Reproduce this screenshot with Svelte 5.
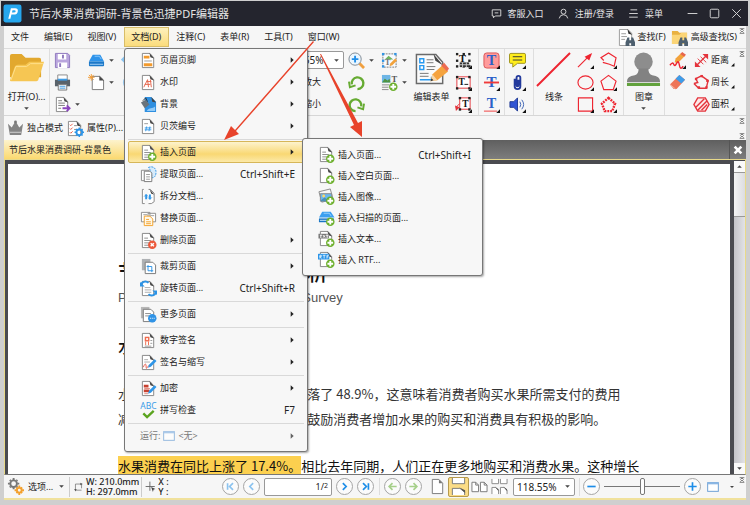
<script lang="ts">
  type MenuItem = { icon: string; label: string; keys?: string; sub?: boolean; active?: boolean };

  let pageNumber = $state('1');
  let zoom = $state('118.55%');
  let zoomLevel = $state(50);

  const menus = ['文件', '编辑(E)', '视图(V)', '文档(D)', '注释(C)', '表单(R)', '工具(T)', '窗口(W)'];

  const groups: MenuItem[][] = [
    [
      { icon: 'header', label: '页眉页脚', sub: true },
      { icon: 'watermark', label: '水印', sub: true },
      { icon: 'background', label: '背景', sub: true },
      { icon: 'bates', label: '贝茨编号', sub: true },
    ],
    [
      { icon: 'insert', label: '插入页面', sub: true, active: true },
      { icon: 'extract', label: '提取页面...', keys: 'Ctrl+Shift+E' },
      { icon: 'split', label: '拆分文档...' },
      { icon: 'replace', label: '替换页面...' },
      { icon: 'remove', label: '删除页面', sub: true },
    ],
    [
      { icon: 'crop', label: '裁剪页面', sub: true },
      { icon: 'rotate', label: '旋转页面...', keys: 'Ctrl+Shift+R' },
    ],
    [{ icon: 'more', label: '更多页面', sub: true }],
    [
      { icon: 'signature', label: '数字签名', sub: true },
      { icon: 'initials', label: '签名与缩写', sub: true },
    ],
    [
      { icon: 'encrypt', label: '加密', sub: true },
      { icon: 'spell', label: '拼写检查', keys: 'F7' },
    ],
  ];

  const insertItems: MenuItem[] = [
    { icon: 'insert', label: '插入页面...', keys: 'Ctrl+Shift+I' },
    { icon: 'insertBlank', label: '插入空白页面...' },
    { icon: 'insertImage', label: '插入图像...' },
    { icon: 'insertScan', label: '插入扫描的页面...' },
    { icon: 'insertText', label: '插入文本...' },
    { icon: 'insertRtf', label: '插入 RTF...' },
  ];

  const page = '<path d="M2.5 1.5h8l4 4.500v10.500h-12z" fill="#fff" stroke="#858585"/><path d="M10 1l5 6-4-1.500z" fill="#444"/>';
  const lines = '<path d="M4.500 6.500h4M4.500 9h7M4.500 11.500h7M4.500 14h5" stroke="#8b8b8b"/>';
  const plus = '<circle cx="13" cy="13.500" r="4.500" fill="#6db02d"/><path d="M13 10.500v6M10 13.500h6" stroke="#fff" stroke-width="2"/>';
  const pen = '<path d="M8.500 14.500l1-3 6-6 2 2-6 6z" fill="#2f96e8"/>';
  const corner = '<path d="M18 14v4h-4z" fill="#111"/>';
  const nodes = (pts: number[][], fill = '#222') =>
    pts.map(([x, y]) => `<rect x="${x - 1}" y="${y - 1}" width="2.500" height="2.500" fill="${fill}"/>`).join('');
  const frame = [[2, 2], [9, 2], [15, 2], [2, 9], [15, 9], [2, 15], [9, 15], [15, 15]];
  const letter = (color: string, size = 14, x = 9, y = 14) =>
    `<text x="${x}" y="${y}" font-family="Liberation Serif, serif" font-weight="700" font-size="${size}" text-anchor="middle" fill="${color}">T</text>`;

  const icons: Record<string, string> = {
    header: page + '<path d="M4 4h6v3H4zM4 12h9v3H4z" fill="#f39a2c"/><path d="M4.500 9.500h8" stroke="#999"/>',
    watermark: page + '<path d="M4 14l4-8 1 8M5 11h6M7 8h5M11 6l1 8" fill="none" stroke="#e5654b"/>',
    background: '<path d="M5 1h7l5 5v11H5z" fill="#2e8fe0"/><path d="M7 16c3-5 6-2 9-5v5z" fill="#92cbf8"/><path d="M1 7l5-3 4 5-5 4z" fill="#69737b"/><path d="M3 5l3-3 2 4" stroke="#333" fill="none"/><path d="M12 1l5 6-4-1z" fill="#444"/>',
    bates: page + '<path d="M4.500 6h4" stroke="#999"/><path d="M7 9l-1 5M10.500 9l-1 5M5 10.500h7M5 12.500h7" stroke="#3a9be8"/>',
    insert: page + lines + plus,
    insertBlank: page + plus,
    insertImage: '<path d="M1 4l12-3 3 11-12 3z" fill="#f7f7f7" stroke="#888"/><path d="M2.500 6h12v8h-12z" fill="#6bb7ef" stroke="#8a8a8a"/><circle cx="6" cy="8.500" r="1.500" fill="#ffd966"/><path d="M3 13l4-3 4 3 3-2v3H3z" fill="#4a8fb8"/>' + plus,
    insertScan: '<path d="M4.500 3h9l4 6H1z" fill="#3b9ff0"/><path d="M6 4.500h6l2 3" stroke="#9bd0fa" fill="none"/><path d="M1 10h16v4H1z" fill="#1875c4"/><path d="M2 12h8" stroke="#cfe8fb"/>' + plus,
    insertText: page + '<path d="M0.500 4h11v5H0.500z" fill="#777"/><path d="M2 5.500h2.500M3 5.500v3M5.500 5.500l2 2.500M7.500 5.500l-2 2.500M8.500 5.500h2.500M9.700 5.500v3" stroke="#fff" fill="none"/>' + plus,
    insertRtf: page + '<path d="M0 3h12v6H0z" fill="#2b95e9"/><path d="M2 8V4.500h1.500v1.500H2l2 2M5 4.500h3M6.500 4.500V8M9.500 8V4.500h2M9.500 6.200h1.500" stroke="#fff" fill="none" stroke-width=".8"/>' + plus,
    extract: '<path d="M9 1.500c5-2 8 1 8 5s-2 6-4 6l-2-8z" fill="#d6ebfb" stroke="#3597e5" stroke-dasharray="2 1"/><path d="M1.500 4.500h8v11h-8z" fill="#fff" stroke="#888"/><path d="M4.500 5.500h6l2 2v9h-8z" fill="#fff" stroke="#777"/><path d="M6.500 9h4M6.500 11.500h4M6.500 14h4" stroke="#999"/>',
    split: '<path d="M4 1.500H2.500v15H5M9 1.500h2l4 4v9l-3 2H9" fill="#fff" stroke="#858585"/><path d="M10 1l5 6-3-1z" fill="#444"/><path d="M6.500 7v5M10.500 7v5" stroke="#3197e8" stroke-width="2"/><path d="M4.500 9l2-2 2 2M8.500 10l2 2 2-2" stroke="#3197e8" fill="none"/>',
    replace: '<path d="M1.500 2.500h9v10h-9zM8.500 3.500h8v9h-8z" fill="#fff" stroke="#8b8b8b"/><path d="M3.500 5h4M11 6h4" stroke="#999"/><path d="M4.500 6.500h6l3 3v7h-9z" fill="#fff8e8" stroke="#f3a129"/><path d="M6.500 10h3M6.500 12.500h5M6.500 14.500h5" stroke="#f3a129"/>',
    remove: page + lines + '<circle cx="13" cy="13.500" r="4.500" fill="#ec5a3c"/><path d="M11.300 11.800l3.400 3.400M14.700 11.800l-3.400 3.400" stroke="#fff" stroke-width="1.500"/>',
    crop: '<path d="M2 1h9v12H2z" fill="#aeb1b4"/><path d="M5.500 4.500h8l3 3v9h-11z" fill="#fff" stroke="#777"/><path d="M8.500 7.500v6h5.500M7 9h5.500v6" fill="none" stroke="#2c93e5"/>',
    rotate: page + '<path d="M5 8h6M5 10.500h7M5 13h7" stroke="#aaa"/><path d="M1 6c0-4 5-6 8-3M17 12c0 4-5 6-8 3" fill="none" stroke="#2c93e5" stroke-width="2"/><path d="M0 2v5h5zM18 16v-5h-5z" fill="#2c93e5"/>',
    more: '<path d="M1 1h9v12H1z" fill="#b7b7b7"/><path d="M3.500 3.500h8l3 3v10h-11z" fill="#fff" stroke="#777"/><path d="M5.500 8h6M5.500 10.500h4" stroke="#888"/><circle cx="13" cy="13" r="4.500" fill="#2f93e6"/><path d="M10.500 13h1M12.500 13h1M14.500 13h1" stroke="#fff"/>',
    signature: page + '<path d="M5 5h5v5H5z" fill="#ef6b4e"/><circle cx="7.500" cy="7.500" r="1.200" fill="#fff"/><path d="M6 10v4M9 10v4" stroke="#ef6b4e"/><path d="M11 9h2M11 12h2M5 15h7" stroke="#999"/>',
    initials: page + '<path d="M4.500 6h4M4.500 8.500h6" stroke="#aaa"/><path d="M3.500 14c2-5 3-4 3 0s2-3 3-1" stroke="#e85a4a" fill="none"/>' + pen,
    encrypt: page + '<path d="M4 5h5v3H4zM4 10h6v3H4z" fill="#c8402e"/><path d="M4.500 9h6M4.500 14.500h4" stroke="#e08a7c"/>' + pen,
    spell: '<text x="9" y="7" font-family="Noto Sans, sans-serif" font-size="9" text-anchor="middle" fill="#3a9ce8">ABC</text><path d="M3.500 12l4 4 7-6.500" fill="none" stroke="#5ba41f" stroke-width="2.500"/>',
    folder: '<path d="M1 4q0-2 2-2h10l4 4h14q2 0 2 2v18H1z" fill="#e2a82e"/><path d="M1 29L6 15q1-2 3-2h8l4-3h15l-6 19q-1 1-2 1H2q-1 0-1-1z" fill="#f6c653"/><path d="M2 29L7 15h11l4-3h13" fill="none" stroke="#ffe08d"/>',
    save: '<path d="M1.500 1.500h13l2 2v13h-15z" fill="#b9a5dd" stroke="#8e78bd"/><path d="M4 2h9v6H4zM4 11h10v6H4z" fill="#fff"/><path d="M9.500 3v4M6.500 12v4" stroke="#8e78bd" stroke-width="2"/>',
    print: '<path d="M4 1h10v6H4z" fill="#fff" stroke="#888"/><path d="M1 6h16v7H1z" fill="#59626a"/><path d="M4 5h10v2H4z" fill="#3d9be5"/><path d="M4.500 11h9v6h-9z" fill="#f5f5f5" stroke="#777"/><path d="M6 13h6M6 15h6" stroke="#3d9be5"/>',
    export: page + '<path d="M4.500 5h4M4.500 7.500h7M4.500 10h7M4.500 13h3" stroke="#777"/><path d="M9 13h7M13.500 10l3 3-3 3" fill="none" stroke="#8a45bd" stroke-width="2"/>',
    scan: '<path d="M5 3h8l4 7H1z" fill="#2d93ea"/><path d="M7 4.500h5l2 3" stroke="#8bc8fa" fill="none"/><path d="M1 10h16v4q0 1-1 1H2q-1 0-1-1z" fill="#1b78c8"/><path d="M2 13h14" stroke="#a8d5f8"/>',
    create: '<path d="M4.500 2.500h8l4 4v10h-12z" fill="#fff" stroke="#777"/><path d="M12 2l5 5h-5z" fill="#444"/><path d="M3.500 0v7M0 3.500h7M1 1l5 5M6 1L1 6" stroke="#f29b32"/>',
    undo: '<path d="M7 3L2 8l5 5M2 8h15" fill="none" stroke="#8dc6f1" stroke-width="3"/>',
    redo: '<circle cx="10" cy="9" r="7" fill="none" stroke="#9cccf0" stroke-width="2"/>',
    zoomIn: '<path d="M12 12l5 5" stroke="#f0a040" stroke-width="3"/><circle cx="7.500" cy="7.500" r="6.500" fill="#eaf6ff" stroke="#7d8790"/><path d="M7.500 4v7M4 7.500h7" stroke="#218ee8" stroke-width="2"/>',
    rotateLeft: '<path d="M4 11A6.200 6.200 0 1 1 10 16" fill="none" stroke="#66ab32" stroke-width="2.500"/><path d="M1 8l1 6 6-2" fill="none" stroke="#66ab32" stroke-width="2"/>',
    rotateRight: '<path d="M14 11A6.200 6.200 0 1 0 8 16" fill="none" stroke="#66ab32" stroke-width="2.500"/><path d="M17 8l-1 6-6-2" fill="none" stroke="#66ab32" stroke-width="2"/>',
    editContent: '<path d="M2 2h14v14H2z" fill="#f8fbff" stroke="#777" stroke-dasharray="2 1"/><path d="M4 8l4-4 5 4z" fill="#71b35c"/>' + letter('#777', 9, 7, 14) + '<path d="M9 15l1-3 5-5 2 2-5 5z" fill="#f2a23b"/>' + nodes([[2, 2], [15, 2], [2, 9], [2, 15]], '#3095e5'),
    addContent: '<path d="M1 1h9v8H1z" fill="#6eb6e6"/><path d="M1 9l3-4 3 2 2-2 1 4z" fill="#4f9443"/>' + letter('#555', 9, 14, 8) + '<path d="M1 11.500h8M1 14h7M1 16.500h7" stroke="#888"/>' + plus,
    form: '<path d="M2.500 2.500h20l7 8v22h-27z" fill="#fafafa" stroke="#6a6a6a" stroke-width="1.500"/><path d="M20 2l10 12-8-5z" fill="#444"/><path d="M6 7h4v4H6zM6 14h4v4H6z" fill="#fff" stroke="#279af1" stroke-width="1.500"/><path d="M13 8h7M13 11h7M13 15h9M13 18h8M6 22h9M6 25h9" stroke="#777"/><path d="M6 28.500h12v-3" fill="none" stroke="#279af1" stroke-width="1.500"/><path d="M17 30l2-7 10-9 6 6-11 9z" fill="#f5a33f"/><path d="M28 14l3-3 5 6-2 3z" fill="#ec6b51"/><path d="M17 30l2-7 5 6z" fill="#f6d6aa"/><path d="M17 30l1-3 2 2z" fill="#333"/>',
    textFrame: nodes(frame) + letter('#111', 11, 8, 11) + '<path d="M5 11h10v5H5z" fill="#333"/><path d="M8 11v5M12 11v5M5 13.500h10" stroke="#ccc"/>' + corner,
    textBox: '<path d="M2 3h14v12H2z" fill="#fff" stroke="#e4343c"/>' + letter('#111', 10, 7, 12) + '<path d="M10 11h4" stroke="#111"/>' + nodes([[2, 3], [15, 3], [2, 15], [15, 15]]) + corner,
    callout: '<path d="M5 2h11v12H5zM5 8L1 12" fill="#fff" stroke="#e4343c"/><path d="M0 10l1 6 4-4z" fill="#e4343c"/>' + letter('#111', 10, 11, 12) + nodes([[5, 2], [15, 2], [5, 14], [15, 14]]) + corner,
    highlight: '<rect x="1" y="1" width="16" height="16" rx="3" fill="#ff9b9b" stroke="#d95353"/>' + letter('#2b61c9', 15) + corner,
    strike: letter('#2b61c9', 16) + '<path d="M1 9h16" stroke="#f03b3b" stroke-width="2"/>' + corner,
    underline: letter('#2b61c9', 15, 9, 13) + '<path d="M1 16h14" stroke="#f03b3b"/>' + corner,
    note: '<path d="M2 1.500h14q1.500 0 1.500 1.500v8q0 1-1.500 1H9l-5 4v-4H2q-1.500 0-1.500-1V3q0-1.500 1.500-1.500z" fill="#ffed1b" stroke="#9b9119"/><path d="M4 5h10M4 8.500h10" stroke="#333"/>' + corner,
    clip: '<path d="M6 5v8q0 3 3 3t3-3V4q0-2-2-2T8 4v8q0 1 1 1t1-1V6" fill="none" stroke="#233a9c" stroke-width="2"/>' + corner,
    sound: '<path d="M1 6h4l4-4v14l-4-4H1z" fill="#3155d4" stroke="#203a93"/><path d="M11.500 6q2 3 0 6M13.500 4q4 5 0 10" fill="none" stroke="#3a61b3"/>' + corner,
    line: '<path d="M1 35L35 1" stroke="#ee2430" stroke-width="2"/>',
    arrow: '<path d="M1 16L14 3" stroke="#ee2430" stroke-width="1.200"/><path d="M8 5l8-4-3 8z" fill="#ee2430"/>' + corner,
    polyline: '<path d="M4 9L1 6l8-5 8 5-2 9-5-2-7-2" fill="none" stroke="#ee2430" stroke-width="1.200"/>' + corner,
    oval: '<ellipse cx="9" cy="9" rx="8" ry="7" fill="none" stroke="#ee2430" stroke-width="1.200"/>' + corner,
    polygon: '<path d="M9 1.500l8 6-3 9H4L1 7.500z" fill="none" stroke="#ee2430" stroke-width="1.200"/>' + corner,
    rect: '<path d="M1.500 2h15v14h-15z" fill="none" stroke="#ee2430" stroke-width="1.200"/>' + corner,
    cloud: '<path d="M9 2l7 6-3 8H5L2 8z" fill="none" stroke="#ee2430" stroke-width="2.500" stroke-dasharray="2 1"/>' + corner,
    stamp: '<circle cx="18" cy="10" r="9.500" fill="#8d8d8d"/><path d="M13 17h10q0 6 4 7 8 1 8 6v1H1v-1q0-5 8-6 4-1 4-7z" fill="#828282"/><path d="M1 33.500h34" stroke="#62a23d" stroke-width="3"/>',
    pencil: '<path d="M6 11l1-4 6-6 4 3-7 7z" fill="#f2a23b"/><path d="M12 2l2-2 4 3-2 2z" fill="#e8664c"/><path d="M1 14q3-4 4-1t3-1 3 2 4 1" fill="none" stroke="#ee2430" stroke-width="1.500"/>' + corner,
    eraser: '<path d="M1 11L11 1l6 5L8 16H5z" fill="#ee7558"/><path d="M7 5l4-4 6 5-4 4z" fill="#3e9ce9"/><path d="M1 11l6 5" stroke="#f7b39f"/>',
    distance: '<path d="M4 14L14 4" stroke="#e4343c" stroke-width="1.500"/><path d="M2 10v6h6zM16 8V2h-6z" fill="#e4343c"/><path d="M5 7l6 6M8 5l6 6" stroke="#e4343c"/>',
    perimeter: '<path d="M3 5l6-3 7 5-2 8H6M3 5l2 4-4 1M1 10l5 5" fill="none" stroke="#e4343c" stroke-width="1.500"/>' + nodes([[3, 5], [9, 2], [15, 7], [14, 14], [6, 14]], '#e4343c'),
    area: '<path d="M5 2h8l4 7-4 7H5L1 9z" fill="#fde8e8" stroke="#e4343c" stroke-width="1.500"/><path d="M3 12L12 3M5 15L15 5M9 15l6-6" stroke="#e4343c" stroke-width="1.500"/>',
    crown: '<path d="M1 4l4 4 4-7 4 7 4-4-2 12H3z" fill="#848484"/><path d="M3 13h12" stroke="#d5d5d5"/><circle cx="9" cy="2" r="1.500" fill="#777"/>',
    properties: '<path d="M1.500 1.500h9l4 4v11h-13z" fill="#fff" stroke="#888"/><path d="M10 1l5 6-4-1z" fill="#444"/><path d="M3 5l1 1 2-2M3 9l1 1 2-2M3 13l1 1 2-2" stroke="#e85842" fill="none"/><path d="M7.500 6h3M7.500 10h4" stroke="#888"/><circle cx="13" cy="13" r="3" fill="none" stroke="#2e94e7" stroke-width="2"/><path d="M13 8v2M13 16v2M8 13h2M16 13h2M9.500 9.500l1 1M15.500 15.500l1 1M16.500 9.500l-1 1M9.500 16.500l1-1" stroke="#2e94e7" stroke-width="1.500"/>',
    find: '<path d="M1.500.500h9l4 4v13h-13z" fill="#fff" stroke="#999"/><path d="M10 0l5 6-4-1z" fill="#333"/><path d="M3.500 5h5M3.500 8h6M3.500 11h4" stroke="#999"/><path d="M10 9h2v3h2V9h2l2 5v4h-4v-3h-2v3H8v-4z" fill="#4d5f6e"/>',
    findAll: '<path d="M1 2h6l2 2h8v12H1z" fill="#e9b141"/><path d="M1 16V6h8l2-2h6v12z" fill="#fbd577"/><path d="M10 9h2v3h2V9h2l2 5v4h-4v-3h-2v3H8v-4z" fill="#4d5f6e"/>',
    gears: '<circle cx="7" cy="6" r="3.500" fill="none" stroke="#777" stroke-width="2"/><path d="M7 0v2M7 10v2M1 6h2M11 6h2M3 2l1 1M10 9l1 1M11 2l-1 1M3 10l1-1" stroke="#777" stroke-width="2"/><circle cx="13" cy="13" r="2.500" fill="none" stroke="#f3a02d" stroke-width="2"/><path d="M13 8v2M13 16v2M8 13h2M16 13h2M10 10l1 1M15 15l1 1M16 10l-1 1M10 16l1-1" stroke="#f3a02d" stroke-width="2"/>',
    size: '<path d="M4 5h10v7M4 5v10h10" fill="none" stroke="#555"/><path d="M12 3l4 2-4 2zM2 13l2 4 2-4z" fill="#555"/>',
    cursor: '<path d="M8 1v15M1 9h15" stroke="#666" stroke-width="1.500"/><path d="M10 10l7 3-3 1-1 4z" fill="#444"/>',
    single: '<path d="M3.500 1.500h7l4 4v11h-11z" fill="#fff" stroke="#777"/><path d="M10.500 1.500l4 4h-4z" fill="#777"/>',
    continuous: '<path d="M2.500 0v6h13V0M2.500 18v-7h8l5 4v3" fill="#fff" stroke="#777"/><path d="M10 10l6 6v-3z" fill="#555"/>',
    facing: '<path d="M1 4.500h4l3 3v7H1zM10 4.500h4l3 3v7h-7z" fill="#fff" stroke="#777"/><path d="M5 4.500v3h3M14 4.500v3h3" stroke="#777" fill="none"/>',
    facingScroll: '<path d="M1 1v5h7V1M10 1v5h7V1M1 17v-7h4l3 3v4M10 17v-7h4l3 3v4" fill="#fff" stroke="#888"/><path d="M4 9l4 5v-2zM13 9l4 5v-2z" fill="#555"/>',
    windowBox: '<rect x="1" y="2.500" width="16" height="13" fill="#fff" stroke="#6fa1d6" stroke-width="1.500"/><path d="M1 2h16v3H1z" fill="#8bb7e4"/>',
    logo: '<rect x=".5" y=".5" width="17" height="17" rx="2" fill="#26a7ee"/><path d="M5 14L7.500 4h4q3 0 2.500 3t-4 3H8l-1 4z" fill="#fff"/><path d="M9 6h2q1 0 1 1t-2 1H8.500z" fill="#26a7ee"/>',
    chat: '<path d="M2 3h14v10H7l-3 3v-3H2z" fill="none" stroke="#ddd" stroke-width="1.500"/><path d="M6 8h6" stroke="#ddd" stroke-width="1.500"/>',
    user: '<circle cx="9" cy="6" r="4" fill="none" stroke="#ddd" stroke-width="1.500"/><path d="M2 17q1-6 7-6t7 6" fill="none" stroke="#ddd" stroke-width="1.500"/>',
    burger: '<path d="M4 3h11M2 9h14M2 15h14" stroke="#ddd" stroke-width="1.500"/>',
    minimize: '<path d="M1 9h16" stroke="#ddd" stroke-width="1.500"/>',
    maximize: '<rect x="2" y="2" width="14" height="14" rx="2" fill="none" stroke="#ddd" stroke-width="1.500"/>',
    close: '<path d="M2 2l14 14M16 2L2 16" stroke="#ddd" stroke-width="1.500"/>',
    tabClose: '<path d="M4 4l10 10M14 4L4 14" stroke="#fff" stroke-width="4"/>',
    caret: '<path d="M3 6h12l-6 6z" fill="#444"/>',
    caretUp: '<path d="M3 12h12L9 6z" fill="#444"/>',
    right: '<path d="M5 1l9 8-9 8z" fill="#222"/>',
    overflow: '<path d="M2 2h14M2 16h14M4 8l5-5 5 5M4 14l5-5 5 5" fill="none" stroke="#444" stroke-width="2"/>',
    first: '<path d="M5.500 5v8M12 5L8 9l4 4" fill="none" stroke="#8cc3ef" stroke-width="2"/>',
    prev: '<path d="M11 5L7 9l4 4" fill="none" stroke="#8cc3ef" stroke-width="2"/>',
    next: '<path d="M7 5l4 4-4 4" fill="none" stroke="#1c8de8" stroke-width="2"/>',
    last: '<path d="M12.500 5v8M6 5l4 4-4 4" fill="none" stroke="#1c8de8" stroke-width="2"/>',
    back: '<path d="M14 9H5M9 5L5 9l4 4" fill="none" stroke="#a6d08a" stroke-width="2"/>',
    forward: '<path d="M4 9h9M9 5l4 4-4 4" fill="none" stroke="#a6d08a" stroke-width="2"/>',
    minus: '<path d="M4 9h10" stroke="#1c8de8" stroke-width="2"/>',
    add: '<path d="M4 9h10M9 4v10" stroke="#1c8de8" stroke-width="2"/>',
    expand: '<path d="M16 4v12H4z" fill="#111"/>',
  };
</script>

{#snippet icon(name: string, kind = 'md')}
  <svg class="icon {kind}" viewBox={kind === 'lg' ? '0 0 36 36' : '0 0 18 18'} aria-hidden="true">{@html icons[name]}</svg>
{/snippet}

{#snippet tool(name: string, title: string, caret = false)}
  <button class="tool" aria-label={title}>
    {@render icon(name)}
    {#if caret}{@render icon('caret', 'xs')}{/if}
  </button>
{/snippet}

{#snippet measure(name: string, label: string)}
  <button class="measure">{@render icon(name)}{label}{@render icon('expand', 'corner')}</button>
{/snippet}

{#snippet menuItem(item: MenuItem)}
  <button class="item" class:active={item.active} role="menuitem">
    {@render icon(item.icon)}
    <span class="name">{item.label}</span>
    {#if item.keys}<span class="keys">{item.keys}</span>{/if}
    {#if item.sub}{@render icon('right', 'xxs')}{/if}
  </button>
{/snippet}

{#snippet round(name: string, title: string)}
  <button class="round" aria-label={title}>{@render icon(name, 'fit')}</button>
{/snippet}

<div class="window">
  <header class="titlebar">
    {@render icon('logo', 'logo')}
    <h1>节后水果消费调研-背景色迅捷PDF编辑器</h1>
    <button>{@render icon('chat', 'sm')}客服入口</button>
    <button>{@render icon('user', 'sm')}注册/登录</button>
    <button>{@render icon('burger', 'sm')}菜单</button>
    <div class="controls">
      <button aria-label="最小化">{@render icon('minimize', 'sm')}</button>
      <button aria-label="最大化">{@render icon('maximize', 'sm')}</button>
      <button aria-label="关闭">{@render icon('close', 'sm')}</button>
    </div>
  </header>

  <div class="body">
    <nav class="menubar">
      {#each menus as menu}
        <button class="menu" class:open={menu === '文档(D)'}>{menu}</button>
      {/each}
      <div class="search">
        <button>{@render icon('find')}查找(F)</button>
        <button>{@render icon('findAll')}高级查找(S)</button>
      </div>
      {@render icon('overflow', 'edge')}
    </nav>

    <div class="toolbar">
      <button class="big open-file">
        {@render icon('folder', 'lg')}
        <span>打开(O)...</span>
        {@render icon('caret', 'xs')}
      </button>
      <div class="group">
        {@render tool('save', '保存')}
        {@render tool('print', '打印')}
        {@render tool('export', '导出', true)}
      </div>
      <div class="group plain">
        {@render tool('scan', '扫描', true)}
        {@render tool('create', '新建', true)}
      </div>
      <div class="group plain">
        {@render tool('undo', '撤销')}
        {@render tool('redo', '重做')}
      </div>
      <div class="group plain zoom-group">
        <div class="select">
          <select aria-label="缩放" bind:value={zoom}><option>118.55%</option></select>
          {@render icon('caret', 'xs')}
        </div>
        <button class="text-tool">放大</button>
        <button class="text-tool">缩小</button>
      </div>
      <div class="group plain">
        {@render tool('zoomIn', '放大工具', true)}
        {@render tool('rotateLeft', '向左旋转')}
        {@render tool('rotateRight', '向右旋转')}
      </div>
      <div class="group plain">
        {@render tool('editContent', '编辑内容', true)}
        {@render tool('addContent', '添加内容', true)}
      </div>
      <button class="big">
        {@render icon('form', 'lg')}
        <span>编辑表单</span>
      </button>
      <div class="group plain">
        {@render tool('textFrame', '打字机')}
        {@render tool('textBox', '文本框')}
        {@render tool('callout', '标注')}
      </div>
      <div class="group spaced">
        {@render tool('highlight', '高亮')}
        {@render tool('strike', '删除线')}
        {@render tool('underline', '下划线')}
      </div>
      <div class="group">
        {@render tool('note', '附注')}
        {@render tool('clip', '附件')}
        {@render tool('sound', '声音')}
      </div>
      <button class="big divided">
        {@render icon('line', 'lg')}
        <span>线条</span>
      </button>
      <div class="group plain">
        {@render tool('arrow', '箭头')}
        {@render tool('oval', '椭圆')}
        {@render tool('rect', '矩形')}
      </div>
      <div class="group plain">
        {@render tool('polyline', '折线')}
        {@render tool('polygon', '多边形')}
        {@render tool('cloud', '云朵')}
      </div>
      <button class="big divided">
        {@render icon('stamp', 'lg')}
        <span>图章</span>
        {@render icon('caret', 'xs')}
      </button>
      <div class="group">
        {@render tool('pencil', '铅笔')}
        {@render tool('eraser', '橡皮擦')}
      </div>
      <div class="group plain">
        {@render measure('distance', '距离')}
        {@render measure('perimeter', '周长')}
        {@render measure('area', '面积')}
      </div>
      {@render icon('overflow', 'edge')}
    </div>

    <div class="subbar">
      <button>{@render icon('crown')}独占模式</button>
      <button>{@render icon('properties')}属性(P)...</button>
      <div class="edges">
        {@render icon('overflow', 'edge')}
        {@render icon('overflow', 'edge')}
      </div>
    </div>

    <div class="tabs">
      <button class="tab">节后水果消费调研-背景色</button>
      <button class="tab-close" aria-label="关闭标签">{@render icon('tabClose', 'xl')}</button>
    </div>

    <main class="viewer">
      <article class="sheet">
        <h2>节后水果消费调研分析</h2>
        <p class="subtitle">Post-festival Fruit Consumption Survey</p>
        <h3>水果价格</h3>
        <p>水果价格比 10 月同期环比整体回落了 48.9%，这意味着消费者购买水果所需支付的费用</p>
        <p>减少了约 48 元的日常总支出对于鼓励消费者增加水果的购买和消费具有积极的影响。</p>
        <p class="next"><mark>水果消费在同比上涨了 17.4%。</mark>相比去年同期，人们正在更多地购买和消费水果。这种增长</p>
      </article>
      <div class="scrollbar">
        <button aria-label="向上滚动">{@render icon('caretUp', 'xs')}</button>
        <div class="thumb"></div>
        <button class="down" aria-label="向下滚动">{@render icon('caret', 'xs')}</button>
      </div>
    </main>

    <footer class="status">
      <button class="options">{@render icon('gears')}<span>选项...</span>{@render icon('caret', 'xs')}</button>
      <div class="metric">
        {@render icon('size', 'sm')}
        <div>W: 210.0mm<br />H: 297.0mm</div>
      </div>
      <div class="metric">
        {@render icon('cursor', 'sm')}
        <div>X :<br />Y :</div>
      </div>
      <div class="pager">
        {@render round('first', '第一页')}
        {@render round('prev', '上一页')}
        <label class="page-box">
          <input aria-label="页码" bind:value={pageNumber} />
          <span>/<small>2</small></span>
        </label>
        {@render round('next', '下一页')}
        {@render round('last', '最后一页')}
      </div>
      <div class="history">
        {@render round('back', '后退')}
        {@render round('forward', '前进')}
      </div>
      <div class="layouts">
        <button aria-label="单页">{@render icon('single')}</button>
        <button class="selected" aria-label="连续">{@render icon('continuous')}</button>
        <button aria-label="双页">{@render icon('facing')}</button>
        <button aria-label="双页连续">{@render icon('facingScroll')}</button>
      </div>
      <div class="select status-zoom">
        <select aria-label="缩放比例" bind:value={zoom}><option>118.55%</option></select>
        {@render icon('caret', 'xs')}
      </div>
      <div class="zoomer">
        {@render round('minus', '缩小')}
        <input type="range" aria-label="缩放滑块" min="0" max="100" bind:value={zoomLevel} />
        {@render round('add', '放大')}
      </div>
      <button class="fit-window" aria-label="窗口">{@render icon('windowBox', 'xl')}</button>
      {@render icon('caret', 'xxs')}
      {@render icon('overflow', 'edge')}
    </footer>
  </div>

  <div class="popup document-menu" role="menu">
    {#each groups as group}
      {#each group as item}
        {@render menuItem(item)}
      {/each}
      <hr />
    {/each}
    <button class="item disabled" role="menuitem" disabled>
      <span>运行:</span>
      {@render icon('windowBox', 'xl')}
      <span class="name">&lt;无&gt;</span>
      {@render icon('right', 'xxs')}
    </button>
  </div>

  <div class="popup insert-menu" role="menu">
    {#each insertItems as item}
      {@render menuItem(item)}
    {/each}
  </div>

  <svg class="pointers" viewBox="0 0 150 110" aria-hidden="true">
    <path d="M102 4L24 93l-4-4-7 14 15-6-3-3L103 5z" fill="#e8432b" />
    <path d="M109 17l34 71-4 2 12 10v-16l-4 2L110 17z" fill="#e8432b" />
  </svg>
</div>

<style>
  :global(body) {
    margin: 0;
  }

  .window {
    position: relative;
    display: flex;
    flex-direction: column;
    box-sizing: border-box;
    height: 100vh;
    padding: 1px 2px 5px 1px;
    overflow: hidden;
    background: #cfcfcf;
    color: #222;
    font: 9px/12px 'Noto Sans', 'Noto Sans CJK SC', sans-serif;
    white-space: nowrap;
  }

  button,
  input,
  select {
    margin: 0;
    padding: 0;
    border: 0;
    background: none;
    color: inherit;
    font: inherit;
  }

  button {
    display: flex;
    align-items: center;
    flex-shrink: 0;
  }

  h1,
  h2,
  h3,
  p {
    margin: 0;
  }

  .icon {
    display: block;
    flex-shrink: 0;
    width: 17px;
    height: 17px;
  }

  .icon.lg {
    width: 35px;
    height: 35px;
  }

  .icon.logo {
    width: 19px;
    height: 19px;
  }

  .icon.sm {
    width: 11px;
    height: 11px;
  }

  .icon.xl {
    width: 12px;
    height: 12px;
  }

  .icon.fit {
    width: 15px;
    height: 15px;
  }

  .icon.xs {
    width: 7px;
    height: 7px;
  }

  .icon.xxs,
  .icon.edge {
    width: 6px;
    height: 6px;
  }

  .icon.corner {
    align-self: flex-end;
    width: 5px;
    height: 5px;
    margin-bottom: 4px;
  }

  .titlebar {
    display: flex;
    align-items: center;
    flex-shrink: 0;
    height: 25px;
    padding: 0 6px 0 2px;
    background: #24252e;
    color: #e6e6e6;
  }

  .titlebar h1 {
    flex: 1;
    margin-left: 7px;
    font-size: 11px;
    line-height: 16px;
    font-weight: 400;
  }

  .titlebar > button {
    gap: 6px;
    margin-right: 14px;
  }

  .controls {
    display: flex;
    gap: 11px;
    margin-left: 10px;
  }

  .body {
    display: flex;
    flex: 1;
    flex-direction: column;
    min-height: 0;
    margin: 0 2px 0 3px;
    background: #f6f6f6;
  }

  .menubar {
    display: flex;
    align-items: center;
    flex-shrink: 0;
    height: 22px;
    border-bottom: 1px solid #dcdcdc;
  }

  .menu {
    height: 20px;
    padding: 0 7px 0 6px;
    border: 1px solid transparent;
  }

  .menu.open {
    border-color: #d8bd68;
    background: linear-gradient(#fdf0bd, #fbdc7c);
  }

  .search {
    display: flex;
    gap: 5px;
    margin: 0 1px 0 auto;
  }

  .search button {
    gap: 3px;
  }

  .menubar > .edge,
  .toolbar > .edge {
    align-self: flex-start;
    margin: 2px 1px;
  }

  .toolbar {
    display: flex;
    flex-shrink: 0;
    height: 66px;
    border-bottom: 1px solid #d6d6d6;
  }

  .big {
    flex-direction: column;
    width: 41px;
    padding-top: 3px;
  }

  .big span {
    margin: 4px 0 2px;
  }

  .group {
    display: grid;
    grid-template-rows: repeat(3, 22px);
    padding: 0 4px;
    border-left: 1px solid #dedede;
  }

  .group.plain {
    padding: 0 3px;
    border-left: 0;
  }

  .group.spaced {
    margin-left: 3px;
  }

  .tool {
    gap: 3px;
  }

  .measure {
    gap: 1px;
  }

  .divided {
    margin-left: 3px;
    border-left: 1px solid #dedede;
  }

  .open-file {
    width: 45px;
  }

  .group.zoom-group {
    align-items: center;
    margin-left: auto;
    padding-right: 1px;
  }

  .select {
    display: grid;
    align-items: center;
    width: 70px;
    height: 18px;
    box-sizing: border-box;
    border: 1px solid #999;
    border-radius: 2px;
    background: #fff;
  }

  .select select,
  .select .icon {
    grid-area: 1 / 1;
  }

  .select select {
    width: 100%;
    padding-left: 3px;
    appearance: none;
    font-size: 10px;
  }

  .select .icon {
    justify-self: end;
    margin-right: 3px;
    pointer-events: none;
  }

  .zoom-group .select select {
    padding-left: 9px;
  }

  .text-tool {
    padding-left: 29px;
  }

  .subbar {
    display: flex;
    align-items: center;
    flex-shrink: 0;
    gap: 4px;
    height: 24px;
    padding-left: 3px;
  }

  .subbar button {
    gap: 3px;
  }

  .edges {
    display: flex;
    flex-direction: column;
    gap: 9px;
    margin: 0 1px 0 auto;
  }

  .tabs {
    display: flex;
    justify-content: space-between;
    flex-shrink: 0;
    height: 19px;
    background: linear-gradient(#5f5f5f, #7d7d7d);
  }

  .tab {
    width: 160px;
    padding-left: 5px;
    background: linear-gradient(#fdf3cd, #fbd970);
  }

  .tab-close {
    justify-content: center;
    width: 17px;
    border-left: 1px solid #555;
  }

  .viewer {
    display: flex;
    flex: 1;
    min-height: 0;
    padding: 4px 0 0 3px;
    overflow: hidden;
    border: 1px solid #e8d989;
    border-bottom: 1px solid #777;
    background: #4a4b50;
  }

  .sheet {
    flex: 1;
    min-width: 0;
    padding: 92px 0 0 110px;
    overflow: hidden;
    background: #fff;
    color: #333;
    font: 13px/25px 'Noto Sans CJK SC', sans-serif;
  }

  .sheet h2 {
    color: #111;
    font-size: 21px;
    font-weight: 500;
    line-height: 30px;
  }

  .subtitle {
    color: #555;
    font: 13px/24px 'Liberation Sans', sans-serif;
  }

  .sheet h3 {
    margin: 23px 0 22px;
    color: #111;
    font-size: 17px;
    font-weight: 500;
    line-height: 26px;
  }

  .next {
    margin-top: 28px;
    color: #111;
    font-family: 'Liberation Sans Narrow', 'Noto Sans CJK SC', sans-serif;
    line-height: 14px;
  }

  mark {
    background: #fcd04f;
    color: inherit;
  }

  .scrollbar {
    display: flex;
    flex-direction: column;
    width: 11px;
    margin: -3px 0 0 4px;
    background: linear-gradient(90deg, #c4c4c8, #e2e2e6);
  }

  .scrollbar button {
    justify-content: center;
    height: 11px;
    background: #fafafa;
  }

  .thumb {
    height: 43px;
    border: solid #999;
    border-width: 1px 0;
    background: linear-gradient(90deg, #f4f4f4, #dcdce0);
  }

  .scrollbar .down {
    margin-top: auto;
  }

  .status {
    display: flex;
    align-items: center;
    flex-shrink: 0;
    height: 23px;
    padding-left: 3px;
    border-bottom: 2px solid #f0e19c;
  }

  .options {
    gap: 4px;
    width: 62px;
  }

  .options .icon.xs {
    margin-left: auto;
    margin-right: 4px;
  }

  .metric {
    display: flex;
    align-items: center;
    gap: 2px;
    padding: 0 2px 0 3px;
    border-left: 1px solid #ccc;
    font-weight: 500;
    line-height: 10px;
  }

  .pager,
  .history,
  .layouts,
  .zoomer {
    display: flex;
    align-items: center;
    gap: 4px;
  }

  .pager {
    margin-left: auto;
  }

  .round {
    justify-content: center;
    box-sizing: border-box;
    width: 17px;
    height: 17px;
    border: 1px solid #a5a5a5;
    border-radius: 50%;
    background: #fbfbfb;
  }

  .page-box {
    display: flex;
    align-items: center;
    box-sizing: border-box;
    width: 68px;
    height: 18px;
    padding-right: 3px;
    border: 1px solid #999;
    border-radius: 2px;
    background: #fff;
  }

  .page-box input {
    flex: 1;
    min-width: 0;
    text-align: right;
  }

  .page-box small {
    font-size: 7px;
    vertical-align: 2px;
  }

  .history {
    margin-left: 5px;
    padding-left: 4px;
    border-left: 1px solid #ddd;
  }

  .layouts {
    gap: 1px;
    margin: 0 4px 0 6px;
  }

  .layouts button {
    height: 20px;
    padding: 0 1px;
  }

  .layouts .selected {
    box-sizing: border-box;
    border: 1px solid #b69a4c;
    border-radius: 2px;
    background: #fbdc86;
  }

  .status-zoom {
    width: 62px;
  }

  .zoomer {
    margin-left: 4px;
    padding-left: 3px;
    border-left: 1px solid #ddd;
  }

  .zoomer input {
    width: 76px;
    height: 18px;
    appearance: none;
    background: linear-gradient(#777, #777) center / 100% 1px no-repeat;
  }

  .zoomer input::-webkit-slider-thumb {
    width: 5px;
    height: 17px;
    appearance: none;
    border: 1px solid #777;
    border-radius: 2px;
    background: #fff;
  }

  .fit-window {
    margin: 0 10px 0 6px;
  }

  .status > .edge {
    align-self: flex-start;
    margin: 2px 1px 0 4px;
  }

  .popup {
    position: absolute;
    box-sizing: border-box;
    border: 1px solid #777;
    border-radius: 3px;
    background: #f7f7f7;
    box-shadow: 1px 1px 2px rgba(0, 0, 0, 0.35);
  }

  .document-menu {
    top: 48px;
    left: 124px;
    width: 184px;
    padding: 0 3px 4px;
  }

  .insert-menu {
    top: 138px;
    left: 302px;
    width: 181px;
    padding: 5px;
  }

  .item {
    box-sizing: border-box;
    width: 100%;
    height: 22px;
    gap: 3px;
    padding: 0 8px 0 11px;
    border: 1px solid transparent;
  }

  .insert-menu .item {
    height: 21px;
    padding: 0 5px 0 9px;
  }

  .item.active {
    border-color: #d6b659;
    border-radius: 2px;
    background: linear-gradient(#fdf3cd, #f9d873 60%, #fce9a8);
  }

  .name {
    flex: 1;
    text-align: left;
  }

  .keys {
    font-size: 10px;
  }

  .disabled {
    color: #777;
  }

  .disabled .icon {
    opacity: 0.7;
  }

  hr {
    height: 1px;
    margin: 2px 0 1px;
    border: 0;
    background: #d9d9d9;
  }

  .pointers {
    position: absolute;
    top: 37px;
    left: 211px;
    width: 150px;
    height: 110px;
    overflow: visible;
    pointer-events: none;
  }
</style>
